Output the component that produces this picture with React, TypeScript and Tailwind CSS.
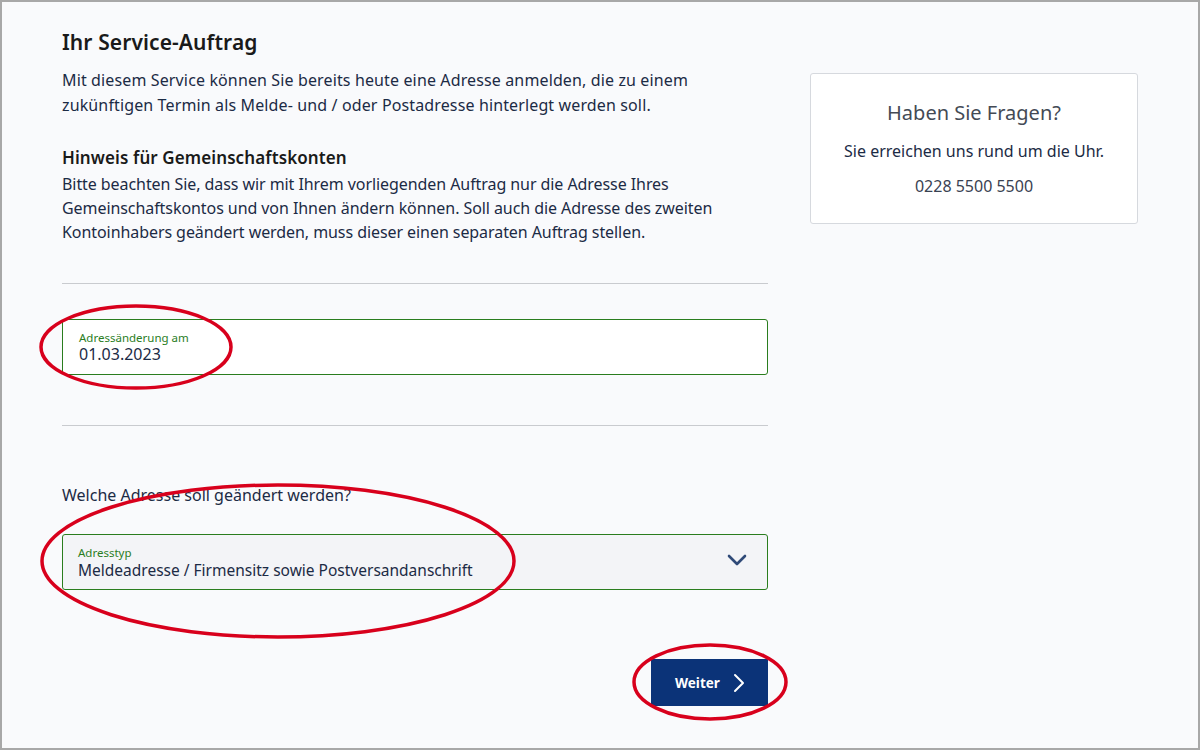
import React from "react";

export default function App() {
  const font = { fontFamily: '"Noto Sans", "Open Sans", Arial, sans-serif' };
  return (
    <div
      className="relative w-[1200px] h-[750px] border-2 border-[#a8a8a8] bg-[#f9fafc] overflow-hidden"
      style={font}
    >
      <div className="flex pl-[60px] pt-[26px]">
        <div className="w-[706px] flex flex-col">
          <h1 className="text-[21px] leading-[28px] font-semibold text-[#1a1a1a] tracking-[0.1px]">
            Ihr Service-Auftrag
          </h1>
          <p className="mt-[12px] text-[16px] leading-[25px] text-[#1c2b45] tracking-[0.13px]">
            Mit diesem Service können Sie bereits heute eine Adresse anmelden, die zu einem
            <br />
            zukünftigen Termin als Melde- und / oder Postadresse hinterlegt werden soll.
          </p>
          <h2 className="mt-[28px] text-[17px] leading-[24px] font-semibold text-[#1a1a1a] tracking-[0.1px]">
            Hinweis für Gemeinschaftskonten
          </h2>
          <p className="mt-[2px] text-[16px] leading-[24px] text-[#1c2b45] tracking-[-0.07px]">
            Bitte beachten Sie, dass wir mit Ihrem vorliegenden Auftrag nur die Adresse Ihres
            <br />
            Gemeinschaftskontos und von Ihnen ändern können. Soll auch die Adresse des zweiten
            <br />
            Kontoinhabers geändert werden, muss dieser einen separaten Auftrag stellen.
          </p>
          <div className="mt-[39px] border-t border-[#c9cbcf]" />
          <div className="mt-[35px] h-[56px] border border-[#2a7d1e] rounded-[3px] bg-white pl-[16px] pt-[10px] flex flex-col">
            <span className="text-[11.5px] leading-[15px] text-[#2a7d1e]">Adressänderung am</span>
            <span className="text-[16px] leading-[18px] text-[#1c2b45]">01.03.2023</span>
          </div>
          <div className="mt-[50px] border-t border-[#c9cbcf]" />
          <p className="mt-[57px] text-[16px] leading-[24px] text-[#1c2b45]">
            Welche Adresse soll geändert werden?
          </p>
          <div className="mt-[27px] h-[56px] border border-[#2a7d1e] rounded-[3px] bg-[#f3f4f7] pl-[15px] pr-[20px] flex items-center">
            <div className="flex flex-col flex-1 pt-[1px]">
              <span className="text-[11.5px] leading-[14px] text-[#2a7d1e]">Adresstyp</span>
              <span className="text-[15.5px] leading-[20px] text-[#1c2b45]">
                Meldeadresse / Firmensitz sowie Postversandanschrift
              </span>
            </div>
            <svg width="20" height="12" viewBox="0 0 20 12" className="mb-[4px]">
              <path
                d="M2 2 L10 10 L18 2"
                fill="none"
                stroke="#2f4a78"
                strokeWidth="2.6"
                strokeLinecap="round"
                strokeLinejoin="round"
              />
            </svg>
          </div>
          <div className="mt-[69px] flex justify-end">
            <button className="h-[47px] w-[117px] bg-[#0b3378] text-white flex items-center pl-[24px] gap-[12px]">
              <span className="text-[13.5px] font-bold leading-[20px]">Weiter</span>
              <svg width="14" height="20" viewBox="0 0 14 20">
                <path
                  d="M3 2 L11 10 L3 18"
                  fill="none"
                  stroke="white"
                  strokeWidth="2"
                  strokeLinecap="round"
                  strokeLinejoin="round"
                />
              </svg>
            </button>
          </div>
        </div>
        <div className="ml-[42px] w-[328px] mt-[45px]">
          <div className="h-[151px] bg-white border border-[#d6d9de] rounded-[3px] flex flex-col items-center pt-[26px]">
            <div className="text-[20px] leading-[26px] text-[#444a55]">Haben Sie Fragen?</div>
            <div className="mt-[13px] text-[16px] leading-[24px] text-[#1c2b45]">
              Sie erreichen uns rund um die Uhr.
            </div>
            <div className="mt-[11px] text-[16px] leading-[24px] text-[#3a4252]">0228 5500 5500</div>
          </div>
        </div>
      </div>
      <svg
        className="absolute top-0 left-0 pointer-events-none"
        width="1196"
        height="746"
        viewBox="2 2 1196 746"
      >
        <ellipse cx="136" cy="347" rx="95" ry="41" fill="none" stroke="#d8001c" strokeWidth="3.5" />
        <ellipse cx="278" cy="561" rx="236" ry="76" fill="none" stroke="#d8001c" strokeWidth="3.5" />
        <ellipse cx="710" cy="682" rx="76" ry="37" fill="none" stroke="#d8001c" strokeWidth="3.5" />
      </svg>
    </div>
  );
}
